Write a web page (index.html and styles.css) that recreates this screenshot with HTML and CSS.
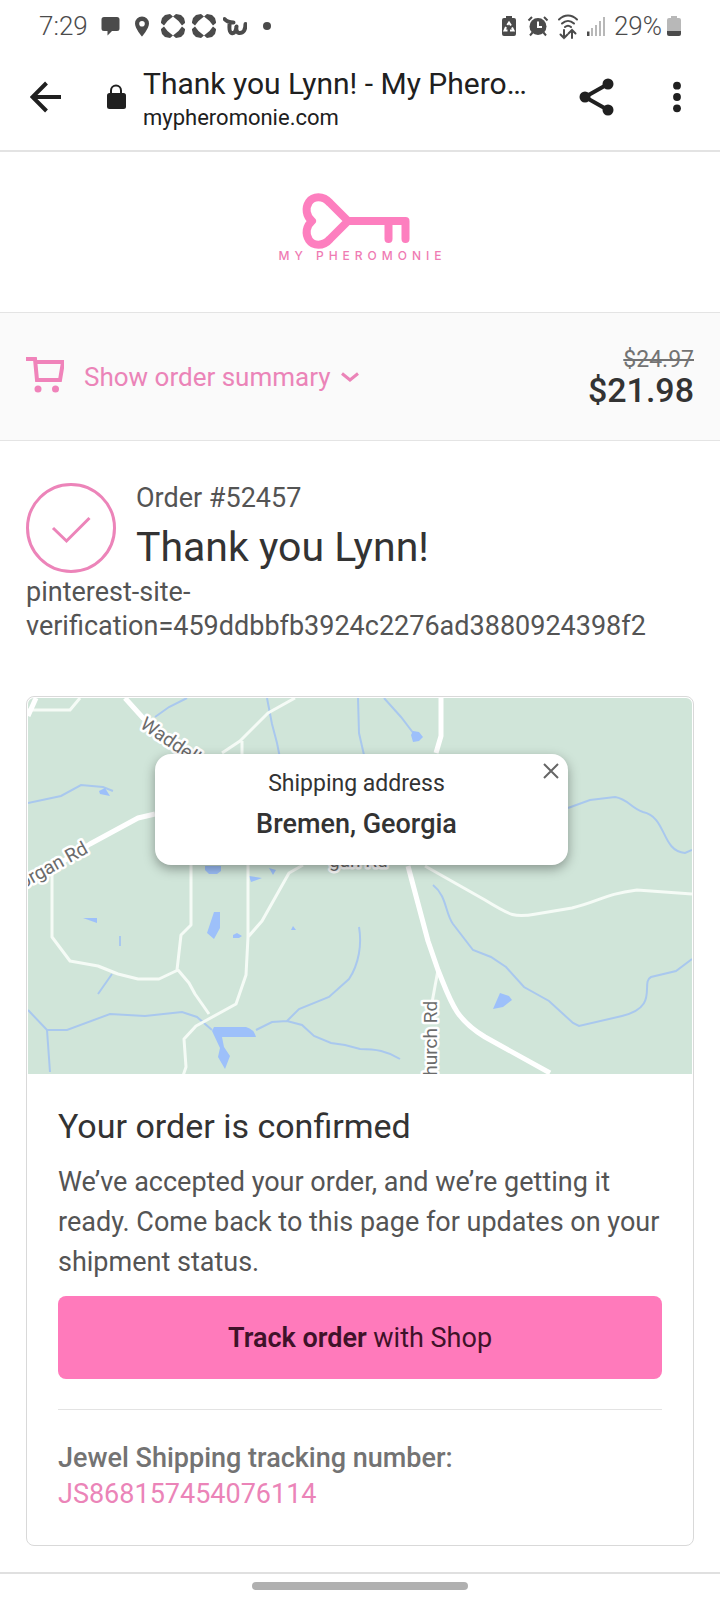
FILE: index.html
```html
<!DOCTYPE html>
<html lang="en">
<head>
<meta charset="utf-8">
<meta name="viewport" content="width=device-width, initial-scale=1">
<title>Thank you Lynn! - My Pheromonie</title>
<link rel="stylesheet" href="styles.css">
</head>
<body>
<div class="status">
  <div class="status-group">
    <span class="clock">7:29</span>
    <svg class="glyph" viewBox="0 0 24 24"><path d="M5 3h13a2.500 2.500 0 0 1 2.500 2.500v9a2.500 2.500 0 0 1-2.500 2.500h-5l-4.500 4.500v-4.500H5a2.500 2.500 0 0 1-2.500-2.500v-9A2.500 2.500 0 0 1 5 3z"/></svg>
    <svg class="glyph" viewBox="0 0 24 24"><path fill-rule="evenodd" d="M12 2.500a7 7 0 0 1 7 7c0 5-7 13-7 13s-7-8-7-13a7 7 0 0 1 7-7zm0 4.500a2.800 2.800 0 1 0 0 5.600 2.800 2.800 0 0 0 0-5.600z"/></svg>
    <svg class="glyph" viewBox="0 0 24 24"><g id="clover"><path d="M0 8 1 4 4 1l5-1 3 2.500L6.500 7 3 11.500 0 9z"/><path d="M24 8l-1-4-3-3-5-1-3 2.500L17.500 7l3.500 4.500L24 9z"/><path d="M0 16l1 4 3 3 5 1 3-2.500L6.500 17 3 12.500 0 15z"/><path d="M24 16l-1 4-3 3-5 1-3-2.500 5.500-4.500 3.500-4.500 3 2.500z"/></g></svg>
    <svg class="glyph" viewBox="0 0 24 24"><use href="#clover"/></svg>
    <svg class="glyph line-bold" viewBox="0 0 24 24"><path d="M1.500 5c2.500 3 6 3.500 9 3.500M6.500 8c.5 3-1.500 10 2 11 3.500.8 4.500-2.500 5-6.500-.5 3.500-.5 6 2.500 6.500 4.500.3 6.500-3 6.500-9"/></svg>
    <svg class="glyph" viewBox="0 0 24 24"><circle cx="13" cy="12" r="4"/></svg>
  </div>
  <div class="status-group status-right">
    <svg class="glyph" viewBox="0 0 24 24"><path d="M8 2h6v2h2a2 2 0 0 1 2 2v14a2 2 0 0 1-2 2H6a2 2 0 0 1-2-2V6a2 2 0 0 1 2-2h2z"/><path class="recycle" d="M9.300 11 11 8.500l2 3M14 13.500l1.500 3H12M9.500 16.500h-3l1.500-3.500"/></svg>
    <svg class="glyph" viewBox="0 0 24 24"><circle cx="11" cy="12.500" r="8.500"/><path class="line" d="M1.500 6.500 5 3M20.500 6.500 17 3M5.500 18.500 3 21.500M16.500 18.500l2.500 3"/><path class="cut" d="M11 7.500v5.500h4"/></svg>
    <svg class="glyph glyph-tall" viewBox="0 0 24 28"><path class="line-thick" d="M3 7.500c5.500-5.300 12.500-5.300 18 0M6 11.500c3.700-3.500 8.300-3.500 12 0M9 15c2-1.700 4-1.700 6 0"/><path class="line-thick" d="M8 18v8M4.500 22.500l3.500 3.500 3.500-3.500M16 26v-8M12.500 21.500l3.500-3.500 3.500 3.500"/></svg>
    <svg class="glyph" viewBox="0 0 24 24"><path d="M2 17.500h2.500V22H2z"/><path class="faint" d="M6 14h2v8H6zM10 11h2v11h-2zM14 7h2v15h-2zM18 3h2v19h-2z"/></svg>
    <span class="clock">29%</span>
    <svg class="charge" viewBox="0 0 14 24"><path class="faint" d="M4 2h6v2h2a2 2 0 0 1 2 2v11H0V6a2 2 0 0 1 2-2h2z"/><path d="M0 17h14v3a2 2 0 0 1-2 2H2a2 2 0 0 1-2-2z"/></svg>
  </div>
</div>

<header class="browser">
  <button class="tool" type="button" aria-label="Back"><svg viewBox="0 0 32 32"><path class="ink-line" d="M31 16H3M16.500 2 2.500 16l14 14"/></svg></button>
  <svg class="lock" viewBox="0 0 20 26"><path class="lock-arch" d="M5 11V6.500a5 5 0 0 1 10 0V11"/><rect x="1" y="9" width="19" height="16" rx="2.500"/></svg>
  <div class="page-id">
    <div class="page-title">Thank you Lynn! - My Phero…</div>
    <div class="page-host">mypheromonie.com</div>
  </div>
  <button class="tool share" type="button" aria-label="Share"><svg viewBox="0 0 36 38"><path class="ink-line" d="M29 6 6 19l23 13"/><circle cx="29" cy="6" r="5.500"/><circle cx="6" cy="19" r="5.500"/><circle cx="29" cy="32" r="5.500"/></svg></button>
  <button class="tool more" type="button" aria-label="More options"><svg viewBox="0 0 8 32"><circle cx="4" cy="4.700" r="3.900"/><circle cx="4" cy="16" r="3.900"/><circle cx="4" cy="27.300" r="3.900"/></svg></button>
</header>

<div class="brand">
  <svg class="brand-key" viewBox="0 0 170 58" aria-hidden="true">
    <path d="M73 29 55 11C48 3 38 4 34 10c-4 6-3 14 3 19-6 5-7 13-3 19 4 6 14 7 21-1L73 29h57.500v18M113.500 31v16"/>
  </svg>
  <div class="brand-name">MY PHEROMONIE</div>
</div>

<section class="summary">
  <button class="summary-toggle" type="button">
    <svg class="cart" viewBox="0 0 38 40"><path d="M0 2h9l2 21h23l3-18H10"/><circle cx="12" cy="32" r="3.500"/><circle cx="29.500" cy="32" r="3.500"/></svg>
    <span>Show order summary</span>
    <svg class="chevron" viewBox="0 0 18 10"><path d="m1 1.500 8 6.500 8-6.500"/></svg>
  </button>
  <div class="prices">
    <s class="price-old">$24.97</s>
    <strong class="price-new">$21.98</strong>
  </div>
</section>

<main class="content">
  <div class="thanks">
    <svg class="done" viewBox="0 0 90 90"><circle cx="45" cy="45" r="43.500"/><path d="m27 45 13.500 13L63.500 35"/></svg>
    <div>
      <div class="order-no">Order #52457</div>
      <h1 class="greeting">Thank you Lynn!</h1>
    </div>
  </div>
  <p class="verify">pinterest-site-<br>verification=459ddbbfb3924c2276ad3880924398f2</p>

  <section class="card">
    <div class="map">
      <svg class="map-art" viewBox="28 698 664 376" preserveAspectRatio="xMidYMid slice">
        <rect class="land" x="28" y="698" width="664" height="376"/>
        <g class="stream">
          <path d="M28 803l33-7 20-11 22 2 10 4M187 698l-18 9-14 10M267 698l5 26 5 19 3 15M358 698l1 35 5 22M384 698l17 19 13 17"/>
          <path d="M28 1010l19 20h20l43-16 35 2 37-4 15 5 15 13M47 1030l3 42M112 974l-14 20M120 936v10M256 1030l16-8 15-1 15 4 12 11 17 7 14 2 15 4c16 0 27 2 40 10M287 1021l12-12 30-12 20-18c10-15 13-35 10-52"/>
          <path d="M568 808l22-8 25-3c13 2 16 11 28 15 24 5 18 39 42 41l7-3M433 885c14 11 12 28 20 39l20 26 18 7 15 10 18 20 25 14 24 22 6 3 43-10c38-9 18-33 29-39l25-6 16-12"/>
        </g>
        <g class="water"><path d="m99 791 6-3 5 8-10-2zM413 731l6 1 4 5-4 4-6 1-2-7zM205 866h16v5l-4 3h-8l-4-4zM249 876l13 2-11 4zM269 868l7 2-3 5zM214 912h6v16l-6 11-7-6zM233 935l4-2 5 3-3 2h-6zM83 918h14v5zM293 926l3 4h-5zM214 1027h32q8 2 10 10h-34l2 10 6 9-5 13-7-12 2-9-8-17zM493 1009l7-16 9 3 3 4-9 7z"/></g>
        <g class="road">
          <path d="M28 710h42l10-12M295 698l-27 15-28 28-18 12M242 741v16M52 870v67l18 24 28 5 20 8 20 5h21l19-9 11 13 6 11 14 20M191 865v60l-10 10-4 35M248 865v72l-2 38-10 29-40 22-12 13 2 28-4 12M248 937l14-16 27-48 14-8M425 866l60 34c26 16 30 18 51 14l36-6c28-7 33-14 65-18l55 4M438 970l-7 38"/>
          <path class="road-wide" d="M28 716l8-18M125 698l18 20 50 37M28 884l62-40 48-26 17-4M441 698v38l-5 17M408 866l20 75 10 29c13 32 17 49 47 67l65 36"/>
        </g>
        <g class="road-name">
          <text transform="translate(139 727) rotate(34)">Waddell Rd</text>
          <text transform="translate(23 889) rotate(-29)">organ Rd</text>
          <text transform="translate(329 867)">gan Rd</text>
          <text transform="translate(437 1088) rotate(-90)">Church Rd</text>
        </g>
      </svg>
      <div class="popup">
        <div class="popup-label">Shipping address</div>
        <div class="popup-place">Bremen, Georgia</div>
        <button class="popup-close" type="button" aria-label="Close"><svg viewBox="0 0 16 16"><path d="m1 1 14 14M15 1 1 15"/></svg></button>
      </div>
    </div>
    <div class="card-body">
      <h2 class="card-title">Your order is confirmed</h2>
      <p class="card-text">We’ve accepted your order, and we’re getting it ready. Come back to this page for updates on your shipment status.</p>
      <button class="track" type="button"><strong>Track order</strong> with Shop</button>
      <div class="tracking">
        <div class="tracking-label">Jewel Shipping tracking number:</div>
        <a class="tracking-link" href="#">JS868157454076114</a>
      </div>
    </div>
  </section>
</main>

<footer class="nav-area"><div class="nav-pill"></div></footer>
</body>
</html>
```

FILE: styles.css
```css
* { box-sizing: border-box; }
body {
  margin: 0;
  min-height: 100vh;
  display: flex;
  flex-direction: column;
  background: #fff;
  color: #333;
  font-family: Roboto, "Liberation Sans", sans-serif;
  font-size: 27px;
}
svg { display: block; flex: none; }
button { border: 0; padding: 0; background: none; font: inherit; color: inherit; cursor: pointer; }
h1, h2, p { margin: 0; font-weight: 400; }

.status {
  height: 52px;
  padding: 0 39px;
  display: flex;
  align-items: center;
  justify-content: space-between;
  color: #4b4b4b;
}
.status-group { display: flex; align-items: center; gap: 7px; }
.status-right { gap: 5px; }
.clock { font-size: 26px; line-height: 52px; font-weight: 300; margin-right: 4px; }
.status-right .clock { margin: 0; }
.glyph { width: 24px; height: 24px; fill: #4b4b4b; }
.glyph-tall { height: 28px; }
.charge { width: 14px; height: 24px; fill: #4b4b4b; }
.faint { fill: #b8b8b8; }
.line { fill: none; stroke: #4b4b4b; stroke-width: 2; }
.line-thick { fill: none; stroke: #4b4b4b; stroke-width: 2; stroke-linecap: round; }
.line-bold { fill: none; stroke: #4b4b4b; stroke-width: 4; stroke-linecap: round; stroke-linejoin: round; }
.cut, .recycle { fill: none; stroke: #fff; stroke-width: 2; }

.browser {
  height: 100px;
  padding: 0 39px 8px 30px;
  display: flex;
  align-items: center;
  border-bottom: 2px solid #e3e3e3;
  color: #202020;
}
.tool svg { width: 32px; height: 32px; fill: #202020; }
.ink-line { fill: none; stroke: #202020; stroke-width: 4; }
.lock { width: 20px; height: 26px; margin: 0 17px 0 44px; fill: #202020; }
.lock-arch { fill: none; stroke: #202020; stroke-width: 2; }
.page-id { flex: 1; min-width: 0; padding-top: 6px; }
.page-title { font-size: 30px; line-height: 36px; white-space: nowrap; }
.page-host { font-size: 22px; line-height: 32px; }
.tool.share svg { width: 36px; height: 38px; }
.tool.more { margin-left: 58px; }
.tool.more svg { width: 8px; }

.brand {
  height: 160px;
  padding-top: 40px;
  display: flex;
  flex-direction: column;
  align-items: center;
}
.brand-key { width: 170px; height: 58px; fill: none; stroke: #fd7fbf; stroke-width: 8; stroke-linecap: round; stroke-linejoin: round; }
.brand-name { font: 500 12px/12px Inter, sans-serif; letter-spacing: 5px; padding-left: 5px; color: #ef7bb3; }

.summary {
  height: 129px;
  padding: 0 26px;
  display: flex;
  align-items: center;
  justify-content: space-between;
  background: #fafafa;
  border-top: 1px solid #e4e4e4;
  border-bottom: 1px solid #e4e4e4;
}
.summary-toggle { display: flex; align-items: center; font-size: 26px; color: #eb84b8; }
.cart { width: 38px; height: 40px; margin-right: 20px; fill: #f083ba; }
.cart path { fill: none; stroke: #f083ba; stroke-width: 4; }
.chevron { width: 18px; height: 10px; margin-left: 10px; fill: none; stroke: #eb84b8; stroke-width: 3; }
.prices { display: flex; flex-direction: column; align-items: flex-end; }
.price-old { font-size: 23px; line-height: 26px; color: #737373; }
.price-new { font-size: 34px; line-height: 34px; font-weight: 500; }

.content { flex: 1; padding: 42px 26px 26px; }
.thanks { display: flex; gap: 20px; }
.done { width: 90px; height: 90px; fill: none; stroke: #ec84b9; stroke-width: 3; }
.order-no { line-height: 30px; color: #545454; }
.greeting { font-size: 41px; line-height: 48px; padding-top: 10px; }
.verify { padding-top: 2px; line-height: 34px; color: #545454; }

.card { margin-top: 53px; border: 1px solid #d9d9d9; border-radius: 8px; padding: 1px; }
.map { position: relative; height: 376px; overflow: hidden; border-radius: 6px 6px 0 0; }
.map-art { width: 100%; height: 100%; }
.land { fill: #d0e5d9; }
.stream { fill: none; stroke: #a9c8ee; stroke-width: 2; }
.water { fill: #9dc0fa; }
.road { fill: none; stroke: #f5fbf6; stroke-width: 3; stroke-linejoin: round; }
.road-wide { stroke: #fff; stroke-width: 5; }
.road-name { font-size: 19px; fill: #6b6b6b; stroke: #fff; stroke-width: 5; stroke-linejoin: round; paint-order: stroke; }
.popup {
  position: absolute;
  top: 56px;
  left: 127px;
  right: 124px;
  padding: 14px 30px 21px 20px;
  border-radius: 16px;
  background: #fff;
  box-shadow: 0 4px 12px rgba(0, 0, 0, 0.35);
  text-align: center;
}
.popup-label { font-size: 23px; line-height: 32px; }
.popup-place { padding-top: 4px; font-weight: 500; line-height: 40px; }
.popup-close { position: absolute; top: 9px; right: 9px; }
.popup-close svg { width: 16px; height: 16px; fill: none; stroke: #666; stroke-width: 2; }

.card-body { padding: 30px 30px 32px; }
.card-title { font-size: 34px; line-height: 44px; }
.card-text { padding-top: 14px; line-height: 40px; color: #545454; }
.track {
  display: block;
  width: 100%;
  height: 83px;
  margin-top: 14px;
  border-radius: 8px;
  background: #ff7abb;
  color: #3f1229;
}
.track strong { font-weight: 600; }
.tracking { margin-top: 30px; padding-top: 30px; border-top: 1px solid #e3e3e3; line-height: 36px; }
.tracking-label { font-weight: 500; color: #737373; }
.tracking-link { color: #eb84b8; text-decoration: none; }

.nav-area { height: 28px; padding-top: 8px; border-top: 2px solid #e0e0e0; }
.nav-pill { width: 30%; height: 8px; margin: 0 auto; border-radius: 4px; background: #b0b0b0; }
```
